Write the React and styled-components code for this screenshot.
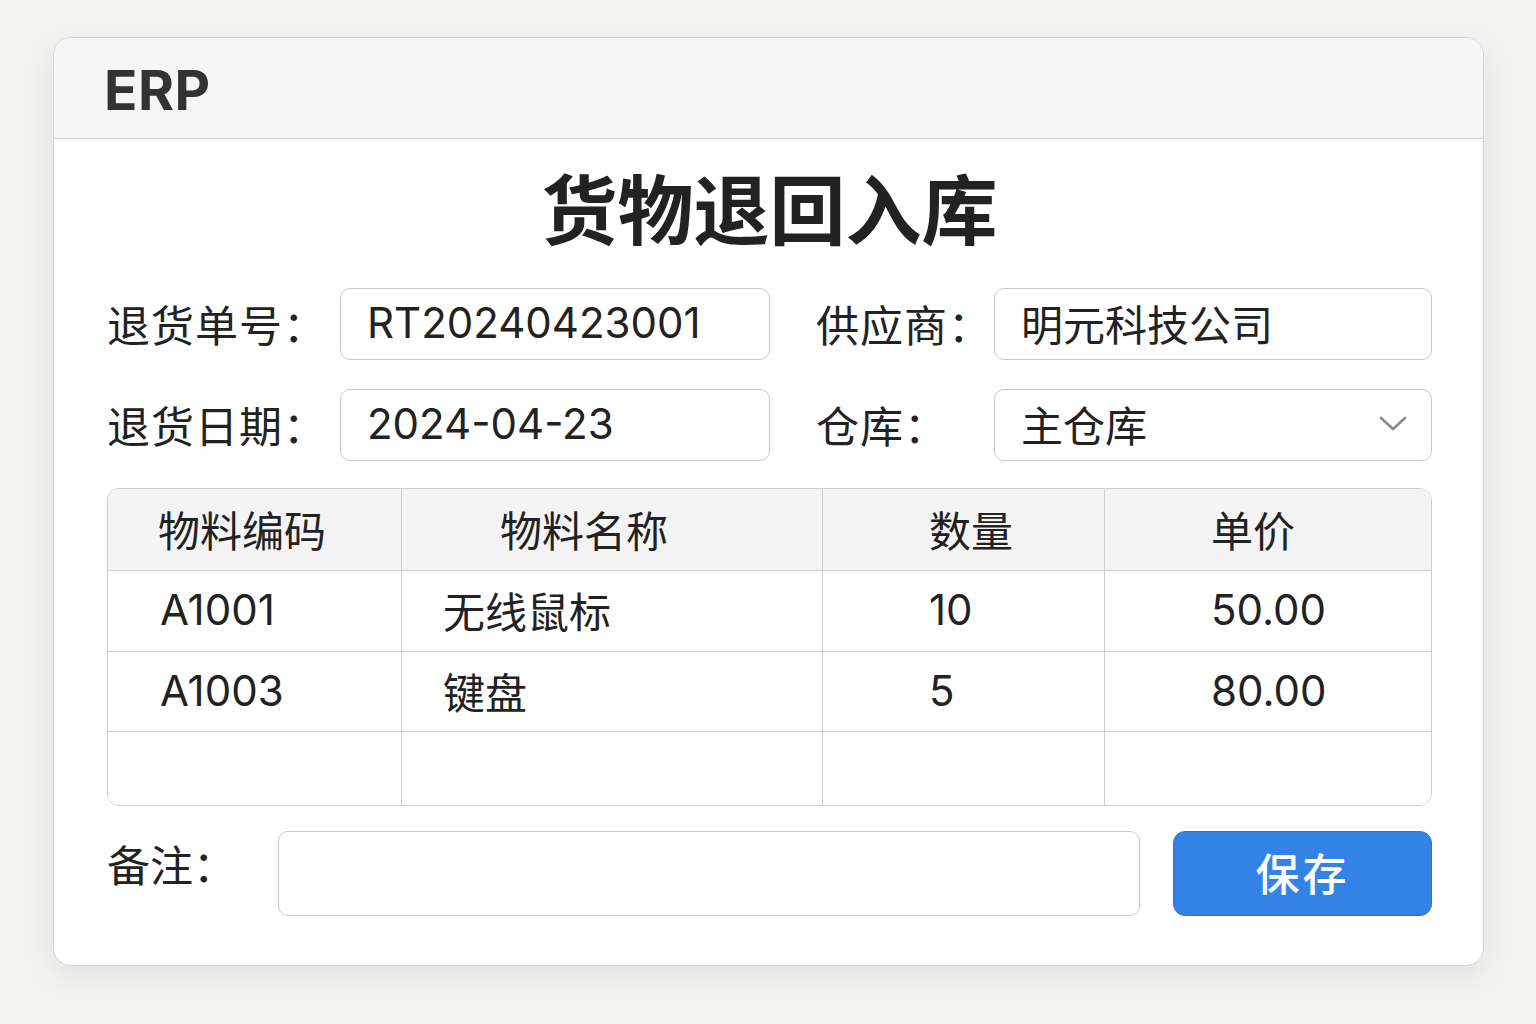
import React from "react";
import styled, { createGlobalStyle } from "styled-components";

const Global = createGlobalStyle`
  html, body { margin: 0; padding: 0; background: #f3f3f2; }
  body { font-family: "Inter", "Noto Sans CJK SC", sans-serif; color: #222; }
  * { box-sizing: border-box; }
`;

const Page = styled.div`
  width: 1536px;
  height: 1024px;
  padding: 37px 52px 0 53px;
`;

const Card = styled.div`
  width: 1431px;
  height: 929px;
  background: #fff;
  border: 1px solid #d6d6d6;
  border-radius: 18px;
  box-shadow: 0 10px 30px rgba(0, 0, 0, 0.08);
  overflow: hidden;
  display: flex;
  flex-direction: column;
`;

const Header = styled.div`
  height: 101px;
  flex: none;
  background: #f6f6f6;
  border-bottom: 1px solid #d2d2d2;
  display: flex;
  align-items: center;
  padding-left: 50px;
`;

const Brand = styled.div`
  font-family: "Inter", sans-serif;
  font-weight: 700;
  font-size: 55px;
  letter-spacing: 0.5px;
  color: #333;
  line-height: 1;
  padding-top: 4px;
`;

const Body = styled.div`
  padding: 0 51px 0 53px;
  display: flex;
  flex-direction: column;
`;

const Title = styled.h1`
  margin: 17px 0 0;
  height: 100px;
  line-height: 100px;
  text-align: center;
  font-family: "Noto Sans CJK SC", sans-serif;
  font-size: 76px;
  font-weight: 700;
  color: #222;
`;

const FormGrid = styled.div`
  margin-top: 32px;
  display: grid;
  grid-template-columns: 233px 430px 46px 178px 438px;
  grid-auto-rows: 72px;
  row-gap: 29px;
`;

const Label = styled.div`
  font-family: "Noto Sans CJK SC", sans-serif;
  font-size: 43px;
  color: #222;
  display: flex;
  align-items: center;
  grid-column: ${(p) => p.$col};
  letter-spacing: 1px;
  padding-bottom: 2px;
`;

const Field = styled.div`
  grid-column: ${(p) => p.$col};
  border: 1px solid #c9c9c9;
  border-radius: 10px;
  display: flex;
  align-items: center;
  justify-content: space-between;
  padding: 0 24px 3px 26px;
  font-size: 42px;
  color: #222;
  background: #fff;
`;

const Chevron = () => (
  <svg width="28" height="16" viewBox="0 0 28 16" fill="none">
    <path d="M2 2 L14 13 L26 2" stroke="#8c8c8c" strokeWidth="2.8" strokeLinecap="round" strokeLinejoin="round" />
  </svg>
);

const Table = styled.div`
  margin-top: 27px;
  border: 1px solid #cfcfcf;
  border-radius: 12px;
  overflow: hidden;
  display: grid;
  grid-template-columns: 294px 421px 282px 1fr;
  grid-template-rows: 82px 81px 80px 1fr;
  height: 318px;
`;

const Cell = styled.div`
  display: flex;
  align-items: center;
  padding-left: ${(p) => p.$pad}px;
  padding-bottom: 3px;
  font-size: 42px;
  color: #222;
  background: ${(p) => (p.$head ? "#f4f4f4" : "#fff")};
  border-right: ${(p) => (p.$last ? "none" : "1px solid #cfcfcf")};
  border-bottom: ${(p) => (p.$bottom ? "none" : "1px solid #cfcfcf")};
  font-family: "Inter", "Noto Sans CJK SC", sans-serif;
`;

const BottomRow = styled.div`
  margin-top: 25px;
  display: grid;
  grid-template-columns: 171px 862px 1fr;
  height: 85px;
`;

const NoteLabel = styled.div`
  font-family: "Noto Sans CJK SC", sans-serif;
  font-size: 43px;
  color: #222;
  padding-top: 2px;
  line-height: 60px;
`;

const NoteInput = styled.div`
  border: 1px solid #c9c9c9;
  border-radius: 10px;
  background: #fff;
`;

const SaveButton = styled.button`
  justify-self: end;
  width: 259px;
  border: 1px solid #2a74d8;
  border-radius: 12px;
  background: #3383e7;
  color: #fff;
  font-family: "Noto Sans CJK SC", sans-serif;
  font-size: 44px;
  font-weight: 500;
  letter-spacing: 3px;
  cursor: pointer;
  padding: 0 0 4px;
`;

const heads = [
  { t: "物料编码", pad: 50 },
  { t: "物料名称", pad: 98 },
  { t: "数量", pad: 106 },
  { t: "单价", pad: 106 },
];
const pads = [52, 41, 106, 106];
const rows = [
  ["A1001", "无线鼠标", "10", "50.00"],
  ["A1003", "键盘", "5", "80.00"],
  ["", "", "", ""],
];

export default function App() {
  return (
    <>
      <Global />
      <Page>
        <Card>
          <Header>
            <Brand>ERP</Brand>
          </Header>
          <Body>
            <Title>货物退回入库</Title>
            <FormGrid>
              <Label $col={1}>退货单号：</Label>
              <Field $col={2}>RT20240423001</Field>
              <Label $col={4}>供应商：</Label>
              <Field $col={5}>明元科技公司</Field>
              <Label $col={1}>退货日期：</Label>
              <Field $col={2}>2024-04-23</Field>
              <Label $col={4}>仓库：</Label>
              <Field $col={5}>
                主仓库
                <Chevron />
              </Field>
            </FormGrid>
            <Table>
              {heads.map((h, i) => (
                <Cell key={"h" + i} $head $pad={h.pad} $last={i === 3}>
                  {h.t}
                </Cell>
              ))}
              {rows.map((r, ri) =>
                r.map((c, ci) => (
                  <Cell
                    key={ri + "-" + ci}
                    $pad={pads[ci]}
                    $last={ci === 3}
                    $bottom={ri === rows.length - 1}
                  >
                    {c}
                  </Cell>
                ))
              )}
            </Table>
            <BottomRow>
              <NoteLabel>备注：</NoteLabel>
              <NoteInput />
              <SaveButton>保存</SaveButton>
            </BottomRow>
          </Body>
        </Card>
      </Page>
    </>
  );
}
